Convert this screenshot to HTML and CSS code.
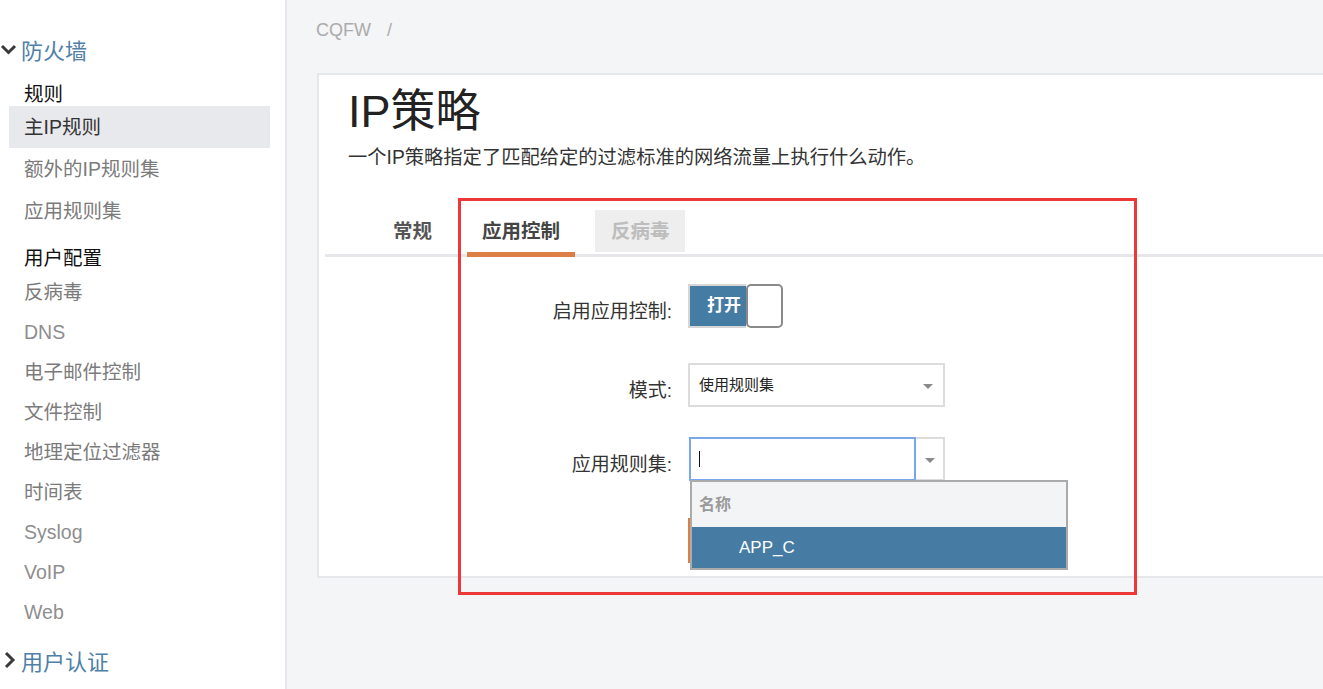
FILE: index.html
```html
<!DOCTYPE html>
<html lang="zh-CN">
<head>
<meta charset="utf-8">
<title>IP策略</title>
<link rel="stylesheet" href="styles.css">
</head>
<body>
<div class="page">
  <aside class="sidebar">
    <div class="sec-head">
      <svg class="chev" width="18" height="14" viewBox="0 0 18 14"><polyline points="2,4 8.5,10.5 15,4" fill="none" stroke="#3a3a3a" stroke-width="3"/></svg>
      <span>防火墙</span>
    </div>
    <div class="group-title">规则</div>
    <div class="items items-lg">
      <div class="item active">主IP规则</div>
      <div class="item">额外的IP规则集</div>
      <div class="item">应用规则集</div>
    </div>
    <div class="group-title second">用户配置</div>
    <div class="items items-second">
      <div class="item">反病毒</div>
      <div class="item latin">DNS</div>
      <div class="item">电子邮件控制</div>
      <div class="item">文件控制</div>
      <div class="item">地理定位过滤器</div>
      <div class="item">时间表</div>
      <div class="item latin">Syslog</div>
      <div class="item latin">VoIP</div>
      <div class="item latin">Web</div>
    </div>
    <div class="sec-head last">
      <svg class="chev" width="18" height="20" viewBox="0 0 18 20"><polyline points="6,3 13,10 6,17" fill="none" stroke="#3a3a3a" stroke-width="3"/></svg>
      <span>用户认证</span>
    </div>
  </aside>

  <main class="main">
    <div class="breadcrumb"><span>CQFW</span><span class="sep">/</span></div>
    <section class="card">
      <div class="card-head">
        <h1 class="title">IP策略</h1>
        <p class="subtitle">一个IP策略指定了匹配给定的过滤标准的网络流量上执行什么动作。</p>
      </div>
      <div class="tabs">
        <div class="tab">常规</div>
        <div class="tab active">应用控制</div>
        <div class="tab disabled">反病毒</div>
      </div>
      <div class="form">
        <div class="row row-toggle">
          <label class="label">启用应用控制:</label>
          <div class="toggle">
            <div class="toggle-on">打开</div>
            <div class="knob"></div>
          </div>
        </div>
        <div class="row row-select">
          <label class="label">模式:</label>
          <div class="select">
            <span class="select-text">使用规则集</span>
            <span class="arrow-box"><span class="caret"></span></span>
          </div>
        </div>
        <div class="row row-combo">
          <label class="label">应用规则集:</label>
          <div class="combo">
            <div class="combo-input"><span class="cursor"></span></div>
            <div class="arrow-box combo-arrow"><span class="caret"></span></div>
            <div class="dropdown">
              <div class="dd-head">名称</div>
              <div class="dd-item">APP_C</div>
            </div>
          </div>
        </div>
        <div class="row row-button">
          <span></span>
          <button class="save-btn" type="button" aria-label="保存"></button>
        </div>
      </div>
    </section>
  </main>
</div>
<div class="annotation"></div>
</body>
</html>
```
FILE: styles.css
```css
html, body {
  margin: 0;
  padding: 0;
  height: 100%;
}
body {
  font-family: "Liberation Sans", "Noto Sans CJK SC", sans-serif;
  color: #333;
  background: #f4f5f7;
  overflow: hidden;
}
.page {
  display: flex;
  height: 689px;
}

/* Sidebar */
.sidebar {
  width: 287px;
  flex: none;
  box-sizing: border-box;
  background: #fff;
  border-right: 2px solid #e7e8eb;
  padding-top: 34px;
}
.sec-head {
  display: flex;
  align-items: center;
  gap: 3px;
  height: 30px;
  font-size: 22px;
  color: #4f80a8;
}
.sec-head .chev { flex: none; }
.sec-head.last {
  margin-top: 13px;
}
.group-title {
  margin-top: 18px;
  padding-left: 24px;
  height: 24px;
  line-height: 24px;
  font-size: 19.5px;
  color: #111;
}
.group-title.second {
  margin-top: 13px;
  height: 26px;
  line-height: 26px;
}
.item {
  margin: 0 15px 0 9px;
  padding-left: 15px;
  height: 40px;
  line-height: 40px;
  font-size: 19.5px;
  color: #7b7b7b;
}
.item.latin {
  color: #8e8e8e;
}
.items-lg .item {
  height: 42px;
  line-height: 42px;
}
.items-second {
  padding-top: 1px;
}
.item.active {
  background: #e8e9ec;
  color: #333;
}

/* Main */
.main {
  flex: 1;
  min-width: 0;
  overflow: hidden;
  padding-left: 29px;
}
.breadcrumb {
  padding-top: 18px;
  height: 24px;
  line-height: 24px;
  font-size: 18px;
  color: #ababab;
}
.breadcrumb .sep {
  margin-left: 16px;
}
.card {
  margin: 31px -40px 0 1px;
  background: #fff;
  border: 2px solid #e6e7ea;
  padding-bottom: 13px;
}
.card-head {
  padding: 10px 0 0 29px;
}
.title {
  margin: 0;
  font-size: 45px;
  font-weight: normal;
  line-height: 54px;
  color: #222;
}
.subtitle {
  margin: 6px 0 0;
  font-size: 19.3px;
  line-height: 26px;
  color: #333;
}

/* Tabs */
.tabs {
  margin: 39px 0 0 6px;
  display: flex;
  gap: 20px;
  padding-left: 53px;
  padding-bottom: 2px;
  border-bottom: 3px solid #e6e7ea;
}
.tab {
  position: relative;
  height: 42px;
  line-height: 42px;
  padding: 0 15px;
  font-size: 19.5px;
  font-weight: bold;
  color: #555;
}
.tab.active {
  color: #444;
}
.tab.active::after {
  content: "";
  position: absolute;
  left: 0;
  right: 0;
  bottom: -5px;
  height: 5px;
  background: #dc7e45;
}
.tab.disabled {
  background: #eeeeee;
  color: #bdbdbd;
  padding: 0 15px 0 16px;
}

/* Form */
.form {
  margin-top: 27px;
}
.row {
  display: grid;
  grid-template-columns: 353px auto;
  column-gap: 16px;
  align-items: center;
}
.row-select { margin-top: 35px; }
.row-combo { margin-top: 30px; }
.row-button { margin-top: 37px; }
.label {
  text-align: right;
  font-size: 19px;
  color: #333;
  padding-top: 6px;
}

.toggle {
  display: flex;
  width: 95px;
  height: 44px;
}
.toggle-on {
  width: 58px;
  box-sizing: border-box;
  background: #457ca4;
  border: 2px solid #d6d6d6;
  border-right: none;
  color: #fff;
  font-weight: bold;
  font-size: 17px;
  line-height: 40px;
  padding-left: 17px;
}
.knob {
  width: 37px;
  box-sizing: border-box;
  border: 2px solid #8a8a8a;
  border-radius: 5px;
  background: #fff;
}

.select {
  display: flex;
  align-items: center;
  width: 257px;
  height: 44px;
  box-sizing: border-box;
  border: 2px solid #dcdcdc;
}
.select-text {
  flex: 1;
  padding-left: 9px;
  font-size: 15px;
  color: #222;
  margin-top: -3px;
}
.arrow-box {
  width: 30px;
  display: flex;
  align-items: center;
  justify-content: center;
  align-self: stretch;
}
.caret {
  width: 0;
  height: 0;
  border-left: 5px solid transparent;
  border-right: 5px solid transparent;
  border-top: 5px solid #8a8a8a;
  margin-top: 2px;
}

.combo {
  position: relative;
  display: flex;
  width: 257px;
  height: 44px;
}
.combo-input {
  width: 227px;
  box-sizing: border-box;
  border: 2px solid #79a7ec;
  display: flex;
  align-items: center;
  padding-left: 8px;
  margin-left: 1px;
}
.cursor {
  width: 1px;
  height: 16px;
  background: #111;
}
.combo-arrow {
  box-sizing: border-box;
  border: 2px solid #dcdcdc;
  border-left: none;
  width: 29px;
}
.dropdown {
  position: absolute;
  top: 43px;
  left: 2px;
  width: 378px;
  box-sizing: border-box;
  border: 2px solid #ababab;
  background: #f3f4f6;
  z-index: 2;
}
.dd-head {
  height: 45px;
  line-height: 45px;
  padding-left: 7px;
  font-size: 16px;
  font-weight: bold;
  color: #9a9a9a;
}
.dd-item {
  height: 41px;
  line-height: 41px;
  background: #467ca3;
  color: #fff;
  font-size: 17px;
  padding-left: 47px;
}

.save-btn {
  width: 100px;
  height: 45px;
  border: none;
  padding: 0;
  background: #dc7e45;
}

/* Annotation box */
.annotation {
  position: absolute;
  left: 458px;
  top: 198px;
  width: 679px;
  height: 397px;
  box-sizing: border-box;
  border: 3px solid #ee3838;
  pointer-events: none;
  z-index: 5;
}
```
